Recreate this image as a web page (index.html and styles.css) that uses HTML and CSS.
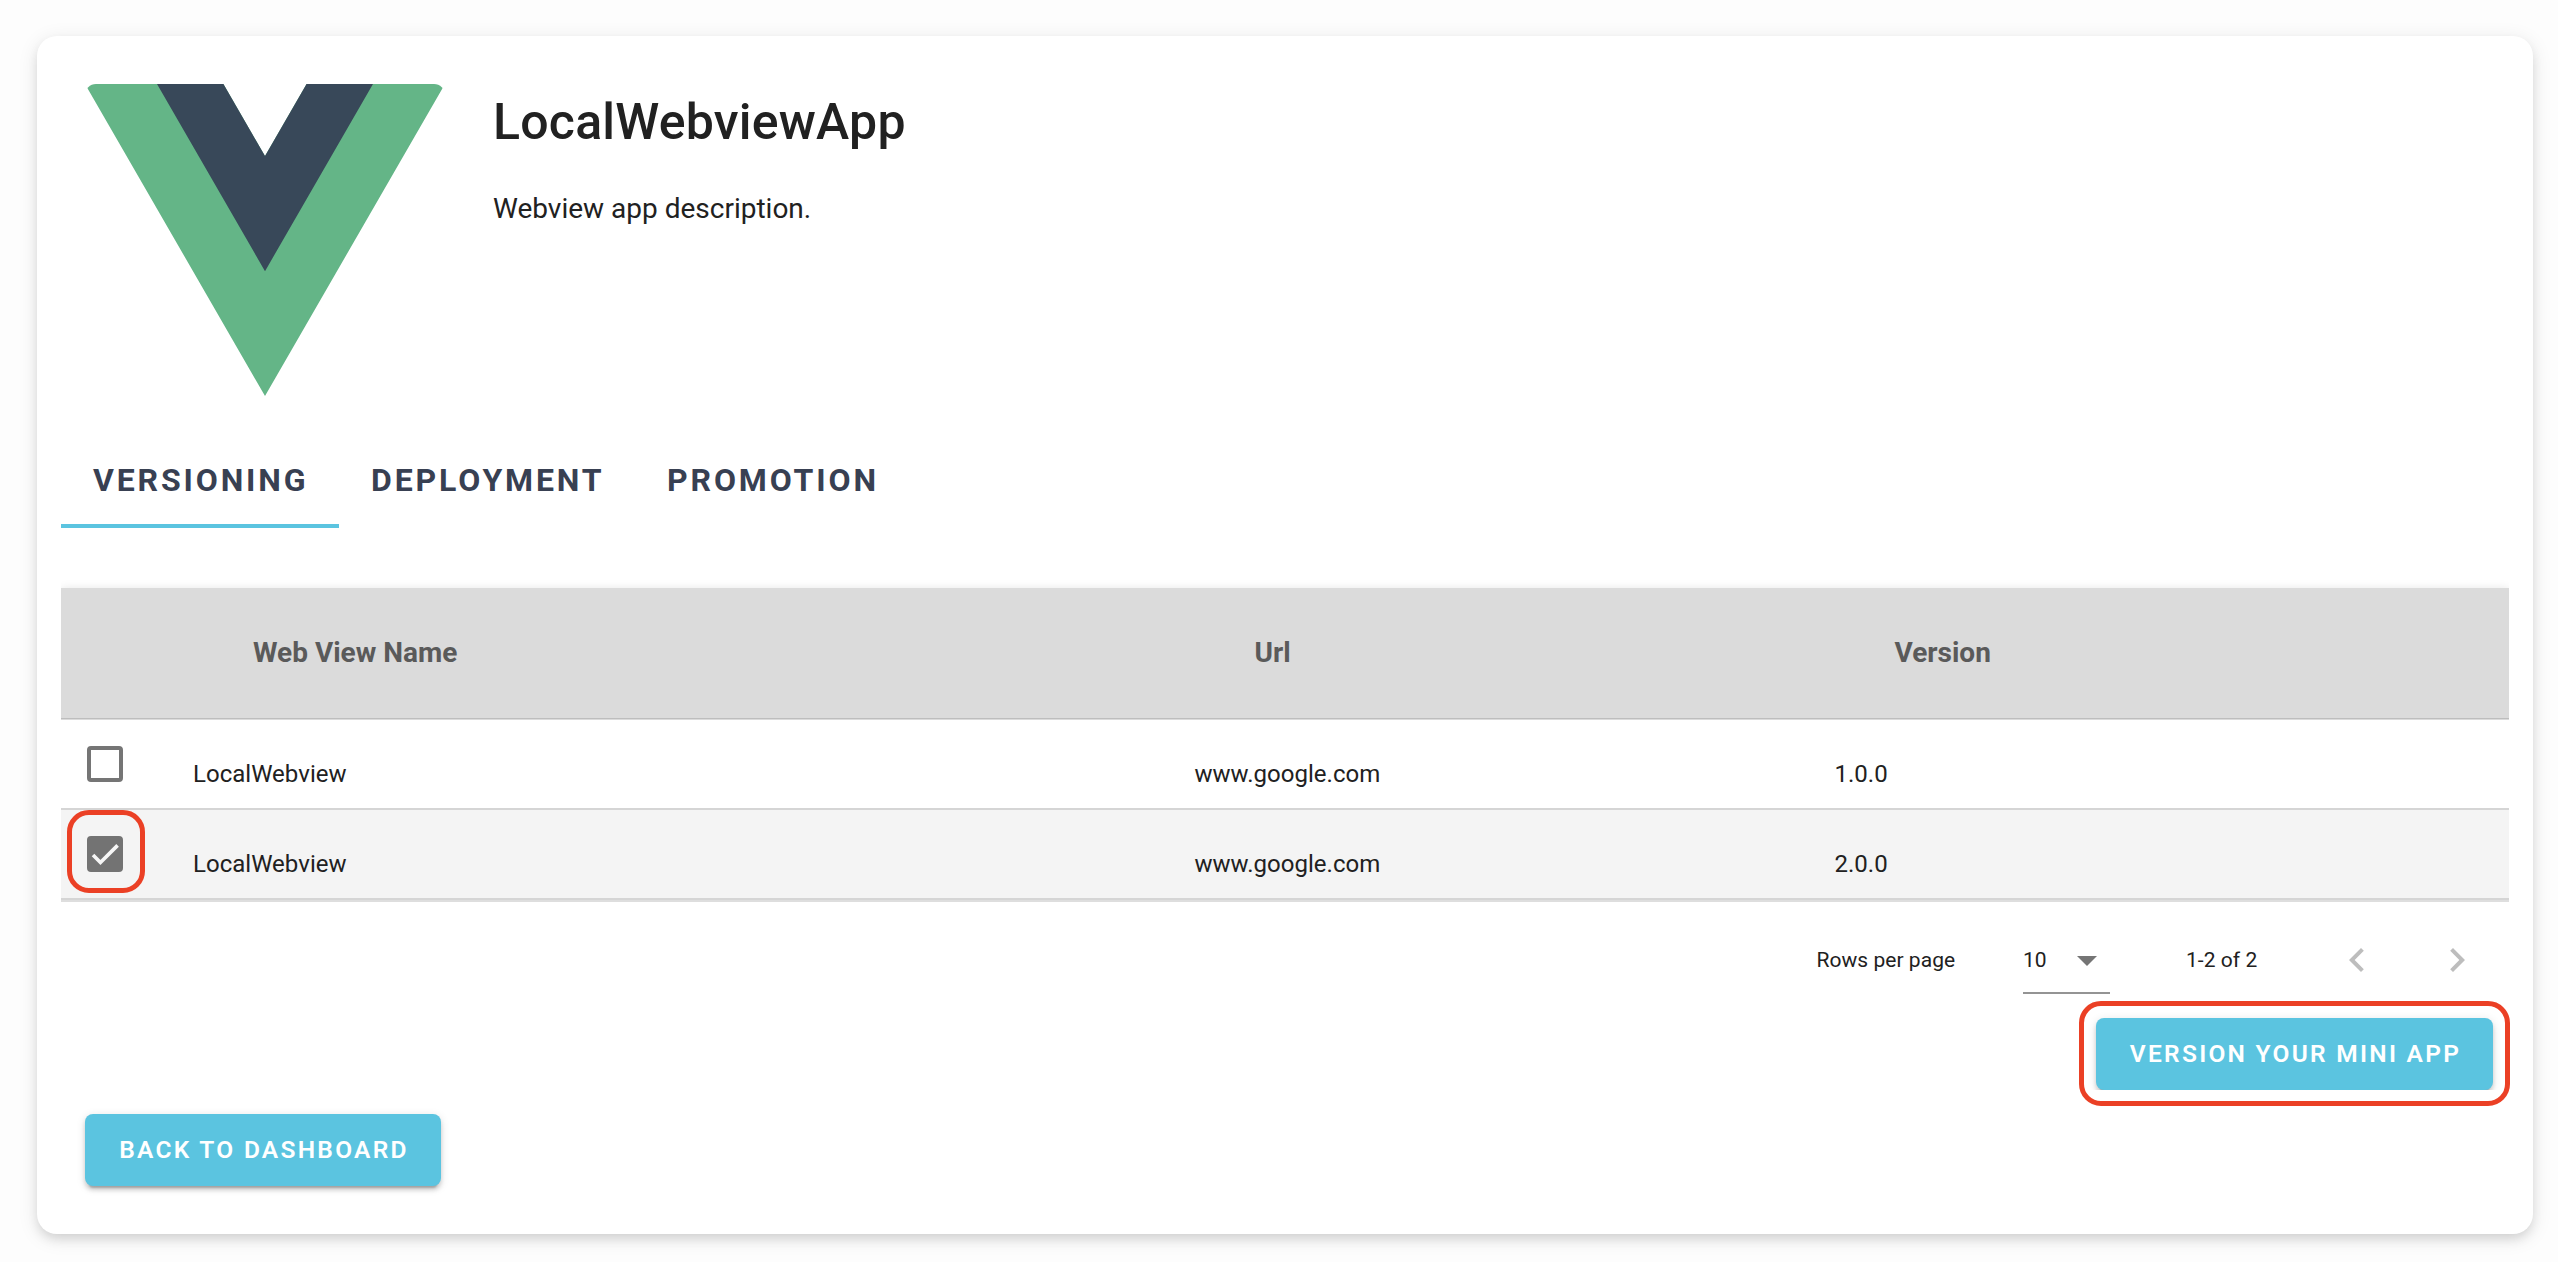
FILE: index.html
```html
<!DOCTYPE html>
<html lang="en">
<head>
<meta charset="utf-8">
<title>LocalWebviewApp</title>
<link rel="stylesheet" href="styles.css">
</head>
<body>
<main class="card">
  <header class="app">
    <svg class="app-logo" viewBox="0 0 261.76 226.69" preserveAspectRatio="none">
      <path fill="#64b587" d="M161.1 0l-30.22 52.35L100.65 0H0l130.88 226.69L261.75 0z"/>
      <path fill="#384859" d="M161.1 0l-30.22 52.35L100.65 0H52.35l78.53 136.01L209.4 0z"/>
    </svg>
    <div class="app-text">
      <h1 class="app-name">LocalWebviewApp</h1>
      <p class="app-desc">Webview app description.</p>
    </div>
  </header>

  <nav class="tabs">
    <a class="tab tab-active">VERSIONING</a>
    <a class="tab">DEPLOYMENT</a>
    <a class="tab">PROMOTION</a>
  </nav>

  <section class="table">
    <div class="row row-head">
      <span></span><span>Web View Name</span><span>Url</span><span>Version</span>
    </div>
    <div class="row">
      <span class="checkbox"></span>
      <span class="cell">LocalWebview</span><span class="cell">www.google.com</span><span class="cell">1.0.0</span>
    </div>
    <div class="row row-selected">
      <span class="checkbox checkbox-on">
        <svg viewBox="0 0 24 24" width="28" height="28"><path fill="none" stroke="#f6f6f6" stroke-width="3.12" d="M1.73 12.91L8.1 19.28 22.79 4.59"/></svg>
        <i class="mark mark-check"></i>
      </span>
      <span class="cell">LocalWebview</span><span class="cell">www.google.com</span><span class="cell">2.0.0</span>
    </div>
  </section>

  <div class="pager">
    <span class="pager-label">Rows per page</span>
    <div class="select">
      <span class="select-value">10</span>
      <svg width="20" height="10" viewBox="0 0 20 10"><path fill="#757575" d="M0 0h20L10 10z"/></svg>
    </div>
    <span class="pager-count">1-2 of 2</span>
    <svg class="pager-prev" viewBox="0 0 24 24"><path d="M15.41 7.41L14 6l-6 6 6 6 1.41-1.41L10.83 12z"/></svg>
    <svg class="pager-next" viewBox="0 0 24 24"><path d="M10 6L8.59 7.41 13.17 12l-4.58 4.59L10 18l6-6z"/></svg>
  </div>

  <div class="actions">
    <div class="clip"><button class="button button-version">VERSION YOUR MINI APP</button></div>
    <i class="mark mark-version"></i>
  </div>
  <button class="button button-back">BACK TO DASHBOARD</button>
</main>
</body>
</html>
```
FILE: styles.css
```css
* { box-sizing: border-box; }

body {
  margin: 0;
  padding: 36px 25px 28px 37px;
  background: #fdfdfd;
  color: #212121;
  font-family: Roboto, sans-serif;
}

.card {
  height: 1198px;
  padding: 48px 24px;
  border-radius: 20px;
  background: #fff;
  box-shadow: 0 6px 12px -2px rgba(0, 0, 0, .12), 0 4px 20px rgba(0, 0, 0, .1);
}

.app {
  display: flex;
  gap: 48px;
  height: 348px;
  padding-left: 24px;
}

.app-logo {
  width: 360px;
  height: 312px;
  border-radius: 11px;
}

.app-text { padding-top: 8px; }

.app-name {
  margin: 0 0 40px;
  font-size: 50px;
  line-height: 60px;
  font-weight: 500;
  letter-spacing: .22px;
}

.app-desc {
  margin: 0;
  font-size: 28px;
  line-height: 34px;
}

.tabs {
  display: flex;
  height: 96px;
}

.tab {
  padding: 28px 30.6px 0 32px;
  color: #384052;
  font-size: 32px;
  line-height: 40px;
  font-weight: 700;
  letter-spacing: .0892857em;
}

.tab-active { border-bottom: 4px solid #5bc4e0; }

.table {
  margin-top: 48px;
  padding-top: 12px;
  padding-bottom: 2px;
  background: linear-gradient(#dedede, #dedede) bottom / 100% 3px no-repeat;
  overflow: hidden;
}

.row {
  display: grid;
  grid-template-columns: 131px 1002.5px 640px 1fr;
  align-items: start;
  height: 90px;
  border-bottom: 2px solid #d5d5d5;
}

.row-head {
  height: 132px;
  padding-top: 48px;
  border-bottom: 0;
  background: linear-gradient(#bdbdbd, #bdbdbd) 0 130px / 100% 1px no-repeat #dbdbdb;
  box-shadow: 0 2px 10px rgba(0, 0, 0, .14);
  color: #5a5a5a;
  font-size: 28px;
  line-height: 34px;
  font-weight: 700;
}

.row-head span { padding-left: 60px; }
.row-head span:nth-child(2) { padding-left: 61px; }
.row-head ~ .row { background: #fff; position: relative; }
.row-head ~ .row-selected { background: #f4f4f4; }

.cell {
  padding-top: 40px;
  font-size: 24px;
  line-height: 28px;
  letter-spacing: .02px;
}

.cell:nth-child(2) { padding-left: 1px; }

.checkbox {
  position: relative;
  width: 36px;
  height: 36px;
  margin: 26px 0 0 26px;
  border: 4px solid #757575;
  border-radius: 4px;
}

.checkbox svg { display: block; }
.checkbox-on { background: #737373; border-color: #737373; }

/* Red call-out frames drawn over the controls */
.mark {
  position: absolute;
  border: 5px solid #eb4025;
  border-radius: 22px;
}

.mark-check { left: -24px; top: -30px; width: 78px; height: 83px; }
.mark-version { right: -1px; top: -17px; width: 431px; height: 105px; }

.pager {
  display: flex;
  align-items: center;
  justify-content: flex-end;
  height: 116px;
  padding-right: 28px;
  font-size: 21px;
  line-height: 26px;
  letter-spacing: .05px;
}

.pager-label { width: 206.6px; }

.select {
  display: flex;
  align-items: center;
  justify-content: space-between;
  width: 87px;
  height: 68px;
  padding-right: 13px;
  border-bottom: 2px solid #949494;
  margin-right: 76px;
}

.select-value { padding-top: 2px; }
.select svg { margin-top: 4px; }
.pager-count { width: 147px; }

.pager-prev, .pager-next {
  width: 48px;
  height: 48px;
  fill: #bdbdbd;
}

.pager-next { margin-left: 52px; }

.actions {
  position: relative;
  display: flex;
  justify-content: flex-end;
  margin-bottom: 24px;
}

/* The wrapper cuts the button shadow off at its lower edge */
.clip {
  margin: -12px 0 0;
  padding: 12px 16px 0;
  overflow: hidden;
}

.button {
  display: block;
  height: 72px;
  padding: 0 0 1px 2px;
  border: 0;
  border-radius: 8px;
  background: #5bc4e0;
  color: #fff;
  font: 600 24.5px/70px Roboto, sans-serif;
  letter-spacing: 2.27px;
  text-align: center;
  white-space: nowrap;
  box-shadow: 0 6px 2px -4px rgba(0, 0, 0, .2), 0 4px 4px rgba(0, 0, 0, .14), 0 2px 10px rgba(0, 0, 0, .12);
}

.button-version { width: 397px; }
.button-back { width: 356px; margin-left: 24px; }
```
